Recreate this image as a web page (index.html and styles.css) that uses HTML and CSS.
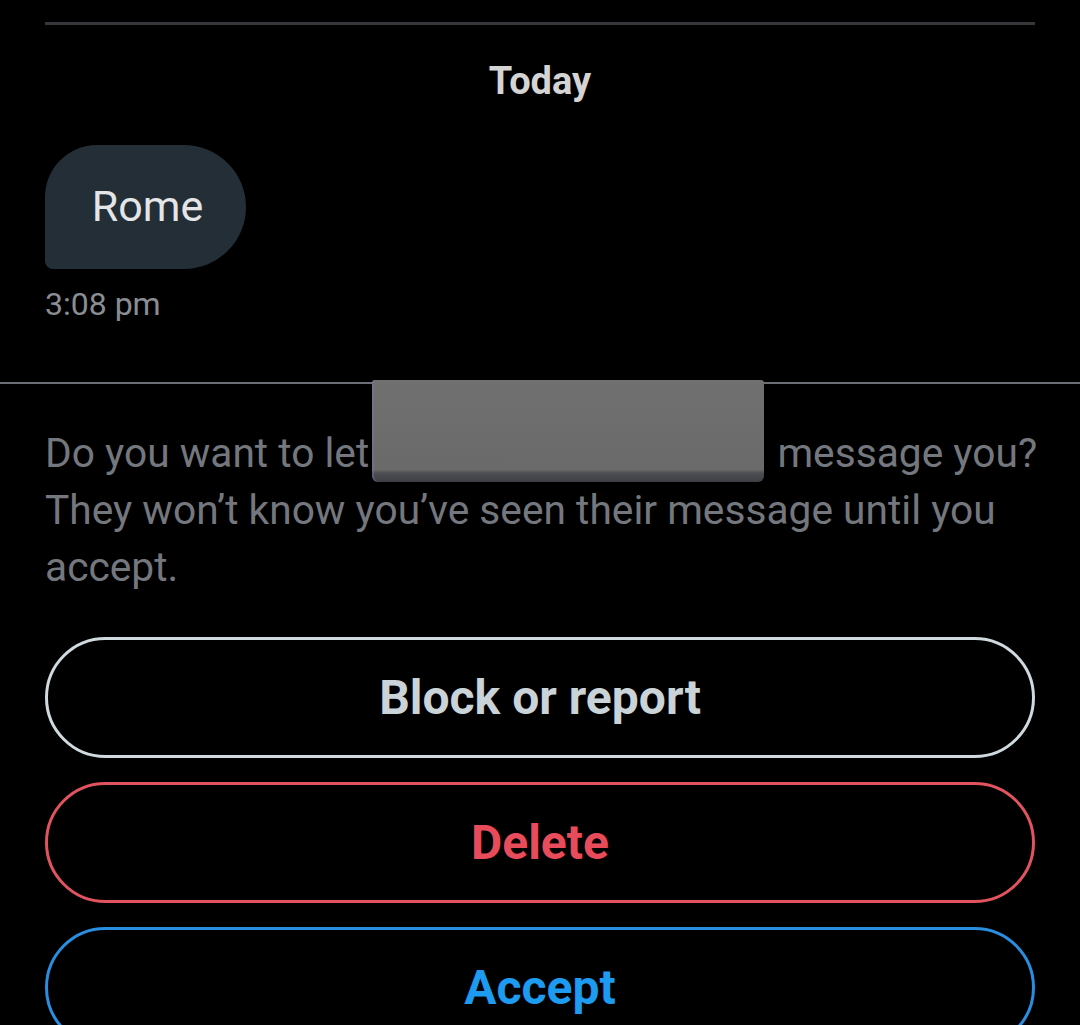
FILE: index.html
```html
<!DOCTYPE html>
<html lang="en">
<head>
<meta charset="utf-8">
<title>Message request</title>
<link rel="stylesheet" href="styles.css">
</head>
<body>
  <div class="thread">
    <div class="top-rule"></div>
    <div class="day">Today</div>
    <div class="bubble">Rome</div>
    <div class="time">3:08 pm</div>
  </div>
  <div class="divider"></div>
  <div class="request">
    <p class="prompt">Do you want to let <span class="name"></span> message you? They won’t know you’ve seen their message until you accept.<span class="redact"></span></p>
    <div class="actions">
      <button class="btn btn-block">Block or report</button>
      <button class="btn btn-delete">Delete</button>
      <button class="btn btn-accept">Accept</button>
    </div>
  </div>
</body>
</html>
```
FILE: styles.css
```css
html, body {
  margin: 0;
  padding: 0;
  background: #000;
  height: 100%;
  overflow: hidden;
}
body {
  font-family: Roboto, "Noto Sans", "Liberation Sans", sans-serif;
  color: #e7e9ea;
}
.thread {
  padding: 0 45px;
  display: flex;
  flex-direction: column;
  align-items: flex-start;
}
.top-rule {
  margin-top: 22px;
  height: 3px;
  width: 100%;
  background: #36373a;
}
.day {
  align-self: stretch;
  text-align: center;
  margin-top: 36px;
  font-size: 38px;
  line-height: 40px;
  font-weight: 700;
  color: #d4d4d4;
}
.bubble {
  margin-top: 44px;
  width: 201px;
  box-sizing: border-box;
  text-align: center;
  padding: 38px 0 40px 4px;
  font-size: 43px;
  line-height: 46px;
  background: #232e37;
  color: #e3e5e6;
  border-radius: 52px 62px 62px 8px;
}
.time {
  margin-top: 17px;
  font-size: 32px;
  line-height: 36px;
  color: #8a8e93;
}
.divider {
  margin-top: 60px;
  height: 2px;
  background: #6c7076;
}
.request {
  padding: 0 45px;
}
.prompt {
  position: relative;
  margin: 41px -20px 0 0;
  font-size: 40.7px;
  line-height: 57px;
  color: #74787e;
}
.name {
  display: inline-block;
  width: 388px;
}
.redact {
  position: absolute;
  left: 327px;
  top: -45px;
  width: 392px;
  height: 102px;
  border-radius: 3px 3px 6px 6px;
  background: linear-gradient(180deg, #707070 0%, #6a6a6a 88%, #4e4f53 91%, #3d3e44 100%);
  box-shadow: inset 2px 0 0 rgba(120, 130, 190, 0.35);
}
.actions {
  margin-top: 41px;
  display: flex;
  flex-direction: column;
  gap: 24px;
}
.btn {
  display: block;
  width: 100%;
  height: 121px;
  background: transparent;
  border: 3px solid;
  border-radius: 61px;
  font-family: inherit;
  font-size: 48px;
  font-weight: 700;
  cursor: pointer;
}
.btn-block {
  border-color: #cfd9de;
  color: #c9d3d8;
}
.btn-delete {
  border-color: #e0535f;
  color: #e84c5b;
}
.btn-accept {
  border-color: #2a8ee0;
  color: #1d9bf0;
}
```
